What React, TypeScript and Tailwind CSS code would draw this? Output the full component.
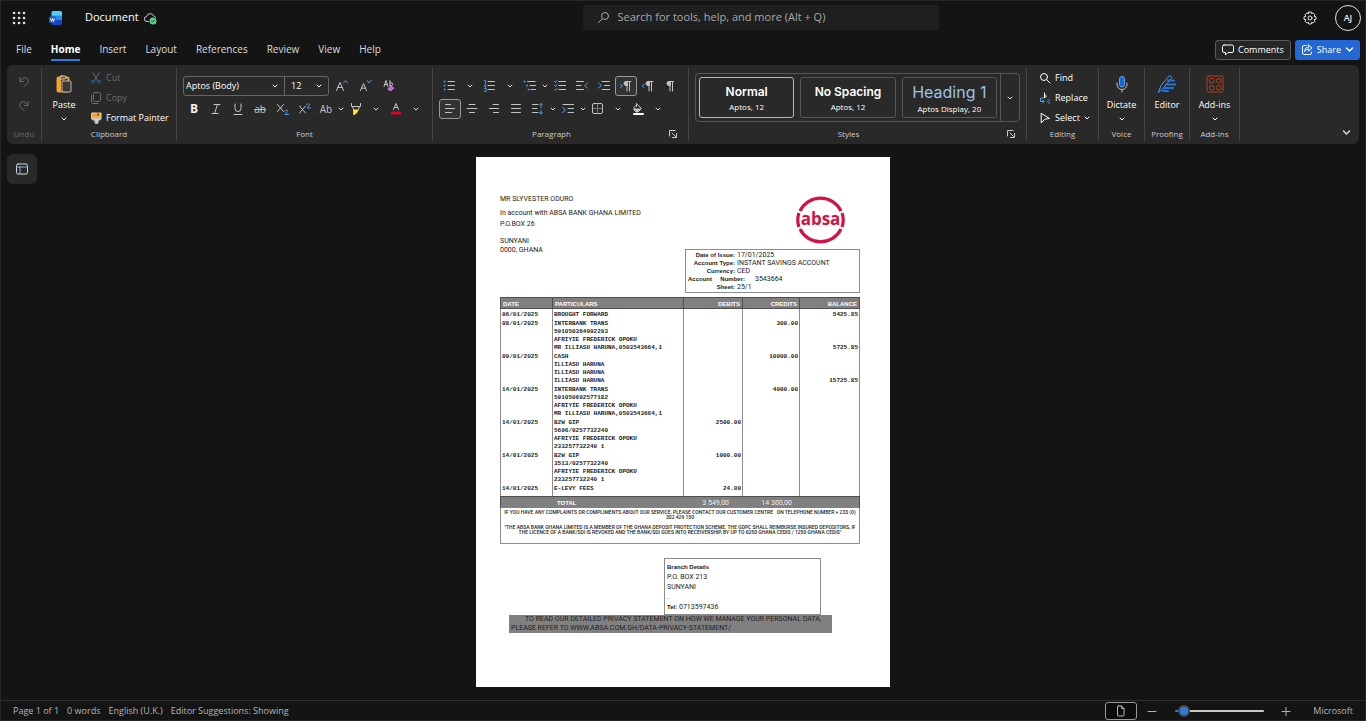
import type { ReactNode } from 'react';

interface Transaction {
    date: string;
    lines: string[];
    debit?: string;
    credit?: string;
    balance?: string;
}

const menuTabs = ['File', 'Home', 'Insert', 'Layout', 'References', 'Review', 'View', 'Help'];

const transactions: Transaction[] = [
    { date: '06/01/2025', lines: ['BROUGHT FORWARD'], balance: '5425.85' },
    {
        date: '08/01/2025',
        lines: ['INTERBANK TRANS', '591050364992293', 'AFRIYIE FREDERICK OPOKU', 'MR ILLIASU HARUNA,0503543664,1'],
        credit: '300.00',
        balance: '5725.85',
    },
    {
        date: '09/01/2025',
        lines: ['CASH', 'ILLIASU HARUNA', 'ILLIASU HARUNA', 'ILLIASU HARUNA'],
        credit: '10000.00',
        balance: '15725.85',
    },
    {
        date: '14/01/2025',
        lines: ['INTERBANK TRANS', '591050692577182', 'AFRIYIE FREDERICK OPOKU', 'MR ILLIASU HARUNA,0503543664,1'],
        credit: '4000.00',
    },
    {
        date: '14/01/2025',
        lines: ['B2W GIP', '5696/0257732240', 'AFRIYIE FREDERICK OPOKU', '233257732240 1'],
        debit: '2500.00',
    },
    {
        date: '14/01/2025',
        lines: ['B2W GIP', '3513/0257732240', 'AFRIYIE FREDERICK OPOKU', '233257732240 1'],
        debit: '1000.00',
    },
    { date: '14/01/2025', lines: ['E-LEVY FEES'], debit: '24.00' },
];

const blue = '#4a9be8';

function Svg({ size = 14, box = 14, children }: { size?: number; box?: number; children: ReactNode }) {
    return (
        <svg
            width={size}
            height={size}
            viewBox={`0 0 ${box} ${box}`}
            fill="none"
            stroke="currentColor"
            strokeLinecap="round"
            strokeLinejoin="round"
            className="shrink-0"
            aria-hidden="true"
        >
            {children}
        </svg>
    );
}

function Chevron({ size = 6 }: { size?: number }) {
    return (
        <Svg size={size} box={6}>
            <path d="M1 2l2 2 2-2" />
        </Svg>
    );
}

const WordLogo = () => (
    <svg width="14" height="16" viewBox="0 0 14 16" aria-hidden="true">
        <path d="M4 1h7.500A1.500 1.500 0 0113 2.500V6H2.500V2.500A1.500 1.500 0 014 1z" fill="#4fd0f5" />
        <path d="M2.500 5.500H13V10H2.500z" fill="#2b8cf0" />
        <path d="M2.500 10H13v3.500a1.500 1.500 0 01-1.500 1.500H4a1.500 1.500 0 01-1.500-1.500z" fill="#1746b8" />
        <rect x="0" y="6.500" width="7" height="6.500" rx="1" fill="#1b57c9" />
        <path d="M1.500 8.300l1 3.200 1-3 1 3 1-3.200" fill="none" stroke="#fff" strokeWidth="0.900" />
    </svg>
);

const CloudSaved = () => (
    <Svg size={14}>
        <path d="M5.500 10.500H4a2.500 2.500 0 01-.3-5A3.600 3.600 0 0110.600 5a2.600 2.600 0 012 1.500" stroke="#c8c8c8" />
        <circle cx="10" cy="10" r="3.500" fill="#5fd08a" stroke="none" />
        <path d="M8.500 10.100l1.100 1.100 2-2.200" stroke="#14532d" />
    </Svg>
);

const Lines = ({ rows, x = 2, end = 12 }: { rows: number[]; x?: number; end?: number }) => (
    <>
        {rows.map((y) => (
            <path key={y} d={`M${x} ${y}.5H${end}`} />
        ))}
    </>
);

const icons = {
    bullets: (
        <Svg>
            <Lines rows={[2, 6, 10]} x={5} end={11.5} />
            <path d="M1.500 2.500h.1M1.500 6.500h.1M1.500 10.500h.1" stroke={blue} strokeWidth="1.800" />
        </Svg>
    ),
    numbers: (
        <Svg>
            <Lines rows={[2, 6, 10]} x={5} end={11.5} />
            <path d="M1.500 1.500h1v3M1.500 6h1.500l-1.500 2h1.500M1.500 9.500h1.500v3H1.500" stroke={blue} />
        </Svg>
    ),
    multilevel: (
        <Svg>
            <path d="M4.500 2.500H12M7 6.500h5.500M8 10.500h4.500" />
            <path d="M1.500 2.500h.1M4 6.500h.1M5.500 10.500h.1" stroke={blue} strokeWidth="1.800" />
        </Svg>
    ),
    checklist: (
        <Svg>
            <Lines rows={[2, 6, 10]} x={6} end={12.5} />
            <path d="M1.500 2.500l1 1 1.500-2M1.500 6.500l1 1 1.500-2M1.500 10.500l1 1 1.500-2" stroke={blue} />
        </Svg>
    ),
    outdent: (
        <Svg>
            <path d="M1.500 2.500H8.500M1.500 6.500H6M1.500 10.500H8.500" />
            <path d="M12.500 4l-3 2.500 3 2.500" stroke={blue} />
        </Svg>
    ),
    indent: (
        <Svg>
            <path d="M5 2.500h7.500M7.500 6.500h5M5 10.500h7.500" />
            <path d="M1.500 4l3 2.500-3 2.500" stroke={blue} />
        </Svg>
    ),
    ltr: (
        <Svg>
            <path d="M8 2.500v9.500M10.500 2.500v9.500M7 2.500h5" />
            <path d="M8 2.500H7a2 2 0 000 4h1z" fill="currentColor" />
            <path d="M1.500 5.500l2 1.500-2 1.500" stroke={blue} />
        </Svg>
    ),
    rtl: (
        <Svg>
            <path d="M8 2.500v9.500M10.500 2.500v9.500M7 2.500h5" />
            <path d="M8 2.500H7a2 2 0 000 4h1z" fill="currentColor" />
            <path d="M3 5.500l-2 1.500 2 1.500" stroke={blue} />
        </Svg>
    ),
    pilcrow: (
        <Svg>
            <path d="M7 2.500v9.500M9.500 2.500v9.500M6 2.500h4.500" />
            <path d="M7 2.500H6a2 2 0 000 4h1z" fill="currentColor" />
        </Svg>
    ),
    left: (
        <Svg>
            <path d="M2.500 2.500h5M2.500 6.500h9M2.500 10.500h6" />
        </Svg>
    ),
    center: (
        <Svg>
            <path d="M4 2.500h6M2 6.500h10M4.500 10.500h5" />
        </Svg>
    ),
    right: (
        <Svg>
            <path d="M6 2.500h5.500M2.500 6.500h9M6.500 10.500h5" />
        </Svg>
    ),
    justify: (
        <Svg>
            <Lines rows={[2, 6, 10]} x={2.5} end={11.5} />
        </Svg>
    ),
    spacing: (
        <Svg>
            <path d="M1.500 2.500H7M1.500 6.500h4.500M1.500 10.500H7" />
            <path d="M10 1.500v4M8.500 3L10 1.500 11.500 3M10 8v4M8.500 10.500L10 12l1.500-1.500" stroke={blue} />
        </Svg>
    ),
    specialIndent: (
        <Svg>
            <path d="M2 2.500h10.500M7 6.500h5.500M7 10.500h5.500" />
            <path d="M1.500 5.500L4.500 8l-3 2.500" stroke={blue} />
        </Svg>
    ),
    borders: (
        <Svg>
            <rect x="1.500" y="1.500" width="10" height="10" rx="1.500" />
            <path d="M6.500 2v9M2 6.500h9" stroke="#777" />
        </Svg>
    ),
    fill: (
        <Svg>
            <path d="M5.500 1.500v3M6.500 2.500l4 4-3.500 3.500H5L3 8V6z" />
            <path d="M3.500 7h6.500l-3 2.500H5z" fill="currentColor" />
            <path d="M3 12h9" strokeWidth="2" stroke="#fff" />
        </Svg>
    ),
    highlight: (
        <Svg>
            <path d="M2.500 1.500v3h9v-3M3.500 4.500l1.500 4h4l1.500-4" />
            <path d="M5 8h4L7.500 11 5 12.500z" fill="#ffee20" stroke="#ffee20" />
        </Svg>
    ),
    fontColor: (
        <Svg>
            <path d="M4.500 7.500L7 1.500l2.500 6M5.500 5.500h3" />
            <path d="M2 9.500h10v3H2z" fill="#e3002b" stroke="none" />
        </Svg>
    ),
    launcher: (
        <Svg size={10} box={10}>
            <path d="M1.500 7V1.500H7M4 4l3.500 3.500M4.500 8.500h4v-4" />
        </Svg>
    ),
    undo: (
        <Svg size={12} box={12}>
            <path d="M2 1.500v4h4M2 5l3-2.500A3.300 3.300 0 019.500 7.300L6 10.500" />
        </Svg>
    ),
    redo: (
        <Svg size={12} box={12}>
            <path d="M10 1.500v4H6M10 5L7 2.500A3.300 3.300 0 002.500 7.300L6 10.500" />
        </Svg>
    ),
    paste: (
        <Svg size={18} box={18}>
            <rect x="2.500" y="2.500" width="11" height="14" rx="1" fill="#2d2d2d" stroke="#f0a030" strokeWidth="2" />
            <path d="M2 3h4v13.500H2z" fill="#f5a02c" stroke="none" />
            <rect x="5" y="1" width="6" height="3" rx="1.300" fill="#555" stroke="#f3d9a8" />
            <rect x="7" y="6" width="9" height="11" rx="1" fill="#383838" stroke="#b8b8b8" />
        </Svg>
    ),
    cut: (
        <Svg size={12} box={12}>
            <path d="M3 1l5 8M9 1L4 9" />
            <g stroke="#2b5f94">
                <circle cx="3" cy="9.800" r="1.500" />
                <circle cx="9" cy="9.800" r="1.500" />
            </g>
        </Svg>
    ),
    copy: (
        <Svg size={12} box={12}>
            <rect x="3.500" y="0.500" width="7" height="9" rx="1.200" />
            <path d="M1.500 3v7a1.500 1.500 0 001.500 1.500h5" />
        </Svg>
    ),
    painter: (
        <Svg size={12} box={12}>
            <path d="M2 1h9v5H2z" fill="#f5a02c" stroke="#f3d9a8" />
            <path d="M2 6h9v1.500L8 8.500v2.500L6.500 12 5 11V8.500L2 7.500z" fill="#d0d0d0" stroke="#bbb" />
            <path d="M8 1v2.500" stroke="#4a3310" />
        </Svg>
    ),
    find: (
        <Svg size={12} box={12}>
            <circle cx="5" cy="5" r="3.500" />
            <path d="M7.700 7.700L11 11" />
        </Svg>
    ),
    replace: (
        <Svg size={12} box={12}>
            <path d="M5.500 1v4.500M5.500 3.500c2-1.500 3 2 0 2" />
            <path d="M4.500 6H1.500v3.500H5M3.700 8L5.200 9.500 3.700 11M10.800 8c-3-.5-3 3.500 0 3" stroke={blue} />
        </Svg>
    ),
    select: (
        <Svg size={12} box={12}>
            <path d="M2.500 1.500l8 5-4.500.7-3.500 3.300z" />
        </Svg>
    ),
    microphone: (
        <Svg size={18} box={18}>
            <path d="M4 8v1.500a5 5 0 0010 0V8M9 14.500V17" stroke="#c4c4c4" />
            <rect x="6.500" y="1.500" width="5" height="10.500" rx="2.500" fill="#1664d0" stroke="#5aa6f0" />
        </Svg>
    ),
    editor: (
        <Svg size={20} box={20}>
            <path d="M1.500 18L4 11.500 12.500 1.500 15 3.500 6.500 14z" stroke="#4a9be8" />
            <path d="M11 6.500h6M9 10.500h9.500M7 14h9M6 17h5" stroke="#2372d8" strokeWidth="2" />
        </Svg>
    ),
    addins: (
        <Svg size={18} box={18}>
            <g stroke="#b5411e">
                <rect x="1" y="1" width="16" height="16" rx="1.500" />
                <rect x="3.500" y="3.500" width="4.500" height="4.500" rx="1" />
                <rect x="10.500" y="3.500" width="4.500" height="4.500" rx="2" />
                <rect x="3.500" y="10.500" width="4.500" height="4.500" rx="2" />
                <rect x="10.500" y="10.500" width="4.500" height="4.500" rx="2" />
            </g>
        </Svg>
    ),
    comment: (
        <Svg size={12} box={12}>
            <path d="M2 1h8a1.500 1.500 0 011.500 1.500v4.500A1.500 1.500 0 0110 8.500H6L3.500 11V8.500H2A1.500 1.500 0 01.500 7V2.500A1.500 1.500 0 012 1z" />
        </Svg>
    ),
    share: (
        <Svg size={12} box={12}>
            <path d="M5 1.500H3A1.500 1.500 0 001.500 3v6A1.500 1.500 0 003 10.500h6A1.500 1.500 0 0010.500 9V8" />
            <path d="M7.500 1l3.500 3-3.500 3V5C5.500 5 4.500 6 3.800 7.500 3.800 5 5 3 7.500 3z" />
        </Svg>
    ),
    gear: (
        <Svg size={14}>
            <circle cx="7" cy="7" r="2" />
            <path d="M5.800 1h2.400l.4 1.700 1.500-.8 1.900 1.900-.9 1.500 1.900.5v2.400l-1.900.5.9 1.500-1.900 1.900-1.500-.8L8.200 13H5.800l-.4-1.700-1.500.8L2 10.200l.9-1.500L1 8.200V5.800l1.900-.5L2 3.800l1.900-1.900 1.500.8z" />
        </Svg>
    ),
    navigation: (
        <Svg size={14}>
            <rect x="1.500" y="2" width="11" height="10" rx="1.500" stroke="#d8d8d8" />
            <path d="M1.500 5h11M5 5v7" stroke="#7db8e8" />
        </Svg>
    ),
    page: (
        <Svg size={12} box={12}>
            <path d="M3.500 1h3l2.500 2.500V10a1 1 0 01-1 1H3.500a1 1 0 01-1-1V2a1 1 0 011-1zM6.500 1v2.500H9" />
        </Svg>
    ),
};

function ToolButton({ label, active = false, children }: { label: string; active?: boolean; children: ReactNode }) {
    return (
        <button
            type="button"
            aria-label={label}
            title={label}
            className={`flex h-5 w-[22px] shrink-0 items-center justify-center rounded-[3px] text-[#c4c4c4] ${
                active ? 'border border-[#9a9a9a] bg-[#333333]' : ''
            }`}
        >
            {children}
        </button>
    );
}

function MenuArrow({ label, wide = false }: { label: string; wide?: boolean }) {
    return (
        <button
            type="button"
            aria-label={label}
            className={`flex h-5 shrink-0 items-center justify-center text-[#d8d8d8] ${wide ? 'w-[18px]' : 'w-2'}`}
        >
            <Chevron />
        </button>
    );
}

function Group({
    name,
    width,
    launcher = false,
    dim = false,
    children,
}: {
    name: string;
    width: string;
    launcher?: boolean;
    dim?: boolean;
    children: ReactNode;
}) {
    return (
        <section aria-label={name} className={`flex shrink-0 flex-col border-r border-[#444444] px-1.5 ${width}`}>
            <div className="h-[60px]">{children}</div>
            <div className={`flex h-3 items-center ${dim ? 'text-[#6b6b6b]' : 'text-[#cccccc]'}`}>
                <span className="flex flex-1 justify-center text-[8px] whitespace-nowrap">{name}</span>
                {launcher && (
                    <button type="button" aria-label={`${name} settings`} className="flex w-[18px] justify-center">
                        {icons.launcher}
                    </button>
                )}
            </div>
        </section>
    );
}

function RowButton({
    icon,
    text,
    disabled = false,
    arrow = false,
}: {
    icon: ReactNode;
    text: string;
    disabled?: boolean;
    arrow?: boolean;
}) {
    return (
        <button
            type="button"
            disabled={disabled}
            className={`flex h-5 items-center gap-1 whitespace-nowrap ${
                disabled ? 'text-[#6b6b6b]' : 'font-medium text-white'
            }`}
        >
            {icon}
            {text}
            {arrow && <Chevron />}
        </button>
    );
}

function BigButton({ icon, text, arrow = false }: { icon: ReactNode; text: string; arrow?: boolean }) {
    return (
        <button type="button" className="flex w-full flex-col items-center pt-1.5 font-medium text-white">
            <span className="flex h-5 items-center">{icon}</span>
            <span className="mt-1 leading-[14px]">{text}</span>
            {arrow && (
                <span className="mt-1">
                    <Chevron />
                </span>
            )}
        </button>
    );
}

function TitleBar() {
    return (
        <header className="grid h-[33px] grid-cols-[15fr_356px_11fr] items-center">
            <div className="flex items-center pl-[11px]">
                <button type="button" aria-label="App launcher" className="text-[#dddddd]">
                    <Svg>
                        {[2, 7, 12].map((y) => (
                            <path key={y} d={`M2 ${y}h.1M7 ${y}h.1M12 ${y}h.1`} strokeWidth="2.6" />
                        ))}
                    </Svg>
                </button>
                <span className="ml-[23px]">
                    <WordLogo />
                </span>
                <h1 className="mr-1 ml-[22px] text-[11px] text-white">Document</h1>
                <CloudSaved />
            </div>
            <label className="flex h-[25px] items-center gap-2 rounded-[3px] bg-[#1f1f1f] px-3.5 text-[#a8a8a8]">
                <Svg size={13} box={13}>
                    <circle cx="8" cy="5" r="3.5" />
                    <path d="M5.300 7.700L1.500 11.500" />
                </Svg>
                <input
                    type="search"
                    aria-label="Search"
                    placeholder="Search for tools, help, and more (Alt + Q)"
                    className="min-w-0 flex-1 bg-transparent text-[11px] outline-none placeholder:text-[#a8a8a8]"
                />
            </label>
            <div className="flex items-center justify-end gap-[18px] pr-1 text-[#e8e8e8]">
                <button type="button" aria-label="Settings">
                    {icons.gear}
                </button>
                <button
                    type="button"
                    aria-label="Account"
                    className="flex size-[26px] items-center justify-center rounded-full border border-[#e0e0e0] text-[9px] font-semibold"
                >
                    AJ
                </button>
            </div>
        </header>
    );
}

function MenuBar() {
    return (
        <div className="flex h-[31px] items-center justify-between pr-[5px] pl-[15px]">
            <nav className="flex gap-[19px] text-[10px] text-[#dddddd]">
                {menuTabs.map((tab) => (
                    <a
                        key={tab}
                        href={`#${tab.toLowerCase()}`}
                        className={`flex h-[22px] items-center border-b-2 pt-0.5 ${
                            tab === 'Home' ? 'border-[#2b7de0] font-bold text-white' : 'border-transparent'
                        }`}
                    >
                        {tab}
                    </a>
                ))}
            </nav>
            <div className="flex gap-1 font-medium">
                <button
                    type="button"
                    className="flex h-5 items-center gap-1 rounded-[3px] border border-[#5c5c5c] bg-[#262626] px-1.5 text-white"
                >
                    {icons.comment}
                    Comments
                </button>
                <button
                    type="button"
                    className="flex h-5 items-center gap-1 rounded-[3px] bg-[#2368d4] px-1.5 text-white"
                >
                    {icons.share}
                    Share
                    <Chevron size={9} />
                </button>
            </div>
        </div>
    );
}

function FontGroup() {
    return (
        <Group name="Font" width="w-64">
            <div className="flex gap-0.5 pt-2">
                <div className="flex h-5 rounded-[3px] border border-[#666666] font-medium text-white">
                    <div className="relative w-[101px] border-r border-[#666666]">
                        <select aria-label="Font" className="h-full w-full appearance-none pl-0.5 outline-none">
                            <option>Aptos (Body)</option>
                        </select>
                        <span className="pointer-events-none absolute inset-y-0 right-1.5 flex items-center">
                            <Chevron />
                        </span>
                    </div>
                    <div className="relative w-[43px]">
                        <select aria-label="Font size" className="h-full w-full appearance-none pl-1.5 outline-none">
                            <option>12</option>
                        </select>
                        <span className="pointer-events-none absolute inset-y-0 right-1.5 flex items-center">
                            <Chevron />
                        </span>
                    </div>
                </div>
                <ToolButton label="Increase font size">
                    <Svg>
                        <path d="M1.500 11.500L5 3.500l3.500 8M2.800 8.500h4.400" />
                        <path d="M8.500 4l2-2.500 2 2.500" stroke={blue} />
                    </Svg>
                </ToolButton>
                <ToolButton label="Decrease font size">
                    <Svg>
                        <path d="M1.500 11.500l3-7 3 7M2.500 9.200h4" />
                        <path d="M8 1.500L10 4l2-2.500" stroke={blue} />
                    </Svg>
                </ToolButton>
                <ToolButton label="Clear formatting">
                    <Svg>
                        <path d="M1 7.500l2-6 2 6M1.800 5.500h2.500M7 1.500v5M7 4a1.600 1.600 0 110 2.500" />
                        <path d="M5 9.500l3-2.500L11 9 8.500 11.500H6.500z" fill="#c26bd6" stroke="#c26bd6" />
                    </Svg>
                </ToolButton>
            </div>
            <div className="mt-[3px] flex">
                <ToolButton label="Bold">
                    <b className="text-xs text-[#f0f0f0]">B</b>
                </ToolButton>
                <ToolButton label="Italic">
                    <Svg>
                        <path d="M5 2.500h6M3 11.500h6M8.500 2.500l-3 9" />
                    </Svg>
                </ToolButton>
                <ToolButton label="Underline">
                    <Svg>
                        <path d="M4 2v4.500a3 3 0 006 0V2M3 12.500h8" />
                    </Svg>
                </ToolButton>
                <ToolButton label="Strikethrough">
                    <s className="text-[10px]">ab</s>
                </ToolButton>
                <ToolButton label="Subscript">
                    <Svg>
                        <path d="M2.500 2.500l6 7M8.500 2.500l-6 7" />
                        <path d="M10 9c1-1.500 3-1 2.500.5L10 12.500h3.500" stroke={blue} />
                    </Svg>
                </ToolButton>
                <ToolButton label="Superscript">
                    <Svg>
                        <path d="M2.500 4l6 7M8.500 4l-6 7" />
                        <path d="M10 2.500c1-1.500 3-1 2.500.5L10 6h3.500" stroke={blue} />
                    </Svg>
                </ToolButton>
                <ToolButton label="Change case">
                    <span className="text-[10px]">Ab</span>
                </ToolButton>
                <MenuArrow label="Change case options" />
                <ToolButton label="Highlight">{icons.highlight}</ToolButton>
                <MenuArrow label="Highlight colours" wide />
                <ToolButton label="Font colour">{icons.fontColor}</ToolButton>
                <MenuArrow label="Font colours" wide />
            </div>
        </Group>
    );
}

function ParagraphGroup() {
    return (
        <Group name="Paragraph" width="w-64" launcher>
            <div className="flex pt-2">
                <ToolButton label="Bullets">{icons.bullets}</ToolButton>
                <MenuArrow label="Bullet options" wide />
                <ToolButton label="Numbering">{icons.numbers}</ToolButton>
                <MenuArrow label="Numbering options" wide />
                <ToolButton label="Multilevel list">{icons.multilevel}</ToolButton>
                <MenuArrow label="Multilevel options" />
                <ToolButton label="Checklist">{icons.checklist}</ToolButton>
                <ToolButton label="Decrease indent">{icons.outdent}</ToolButton>
                <ToolButton label="Increase indent">{icons.indent}</ToolButton>
                <ToolButton label="Left to right" active>
                    {icons.ltr}
                </ToolButton>
                <ToolButton label="Right to left">{icons.rtl}</ToolButton>
                <ToolButton label="Show marks">{icons.pilcrow}</ToolButton>
            </div>
            <div className="mt-[3px] flex">
                <ToolButton label="Align left" active>
                    {icons.left}
                </ToolButton>
                <ToolButton label="Centre">{icons.center}</ToolButton>
                <ToolButton label="Align right">{icons.right}</ToolButton>
                <ToolButton label="Justify">{icons.justify}</ToolButton>
                <ToolButton label="Line spacing">{icons.spacing}</ToolButton>
                <MenuArrow label="Line spacing options" />
                <ToolButton label="Special indent">{icons.specialIndent}</ToolButton>
                <MenuArrow label="Indent options" />
                <ToolButton label="Borders">{icons.borders}</ToolButton>
                <MenuArrow label="Border options" wide />
                <ToolButton label="Shading">{icons.fill}</ToolButton>
                <MenuArrow label="Shading options" wide />
            </div>
        </Group>
    );
}

function StylesGroup() {
    return (
        <Group name="Styles" width="w-[338px]" launcher>
            <div className="flex h-full pt-[5px] pb-1.5">
                <div className="flex flex-1 rounded border border-[#555555]">
                    <div className="grid flex-1 grid-cols-3 gap-1.5 p-[3px] text-white">
                        <button type="button" className="rounded-[3px] border border-[#b8b8b8]">
                            <span className="block font-[Inter] text-xs leading-[18px] font-semibold">Normal</span>
                            <span className="block text-[8px] leading-3 font-medium">Aptos, 12</span>
                        </button>
                        <button type="button" className="rounded-[3px] border border-[#555555]">
                            <span className="block font-[Inter] text-xs leading-[18px] font-semibold whitespace-nowrap">
                                No Spacing
                            </span>
                            <span className="block text-[8px] leading-3 font-medium">Aptos, 12</span>
                        </button>
                        <button type="button" className="rounded-[3px] border border-[#555555]">
                            <span className="block font-[Inter] text-base leading-[22px] font-normal whitespace-nowrap text-[#9cc3e6]">
                                Heading 1
                            </span>
                            <span className="block text-[8px] leading-3 font-medium whitespace-nowrap">
                                Aptos Display, 20
                            </span>
                        </button>
                    </div>
                    <button
                        type="button"
                        aria-label="More styles"
                        className="flex w-[19px] items-center justify-center border-l border-[#555555] text-[#d8d8d8]"
                    >
                        <Chevron />
                    </button>
                </div>
            </div>
        </Group>
    );
}

function Ribbon() {
    return (
        <div className="mx-1.5 flex h-[79px] rounded-md bg-[#292929] py-[3px]">
            <Group name="Undo" width="w-[35px]" dim>
                <div className="flex flex-col items-center gap-3 pt-2 text-[#6b6b6b]">
                    <button type="button" aria-label="Undo" disabled>
                        {icons.undo}
                    </button>
                    <button type="button" aria-label="Redo" disabled>
                        {icons.redo}
                    </button>
                </div>
            </Group>
            <Group name="Clipboard" width="w-[135px]">
                <div className="flex gap-2.5">
                    <div className="w-8">
                        <BigButton icon={icons.paste} text="Paste" arrow />
                    </div>
                    <div>
                        <RowButton icon={icons.cut} text="Cut" disabled />
                        <RowButton icon={icons.copy} text="Copy" disabled />
                        <RowButton icon={icons.painter} text="Format Painter" />
                    </div>
                </div>
            </Group>
            <FontGroup />
            <ParagraphGroup />
            <StylesGroup />
            <Group name="Editing" width="w-[72px]">
                <div className="pl-1.5">
                    <RowButton icon={icons.find} text="Find" />
                    <RowButton icon={icons.replace} text="Replace" />
                    <RowButton icon={icons.select} text="Select" arrow />
                </div>
            </Group>
            <Group name="Voice" width="w-[46px]">
                <BigButton icon={icons.microphone} text="Dictate" arrow />
            </Group>
            <Group name="Proofing" width="w-[45px]">
                <BigButton icon={icons.editor} text="Editor" />
            </Group>
            <Group name="Add-ins" width="w-[50px]">
                <BigButton icon={icons.addins} text="Add-ins" arrow />
            </Group>
            <div className="flex flex-1 items-end justify-end pr-2 pb-1">
                <button type="button" aria-label="Collapse ribbon" className="text-[#d8d8d8]">
                    <Chevron size={9} />
                </button>
            </div>
        </div>
    );
}

const AbsaLogo = () => (
    <svg width="50" height="50" viewBox="0 0 50 50" role="img" aria-label="absa">
        <g fill="none" stroke="#d31245" strokeWidth="3.200">
            <path d="M4 16A22.800 22.800 0 0145 16" />
            <path d="M4 34A22.800 22.800 0 0045 34" />
            <path d="M2.900 18a22.800 22.800 0 000 14" />
            <path d="M46.100 18a22.800 22.800 0 010 14" />
        </g>
        <text x="24.500" y="30" textAnchor="middle" fill="#d31245" className="font-['Open_Sans'] text-[17px] font-bold">
            absa
        </text>
    </svg>
);

const details = [
    ['Date of Issue:', '17/01/2025'],
    ['Account Type:', 'INSTANT SAVINGS ACCOUNT'],
    ['Currency:', 'CED'],
    ['Account Number:', '3543664'],
    ['Sheet:', '25/1'],
];

function DetailsBox() {
    return (
        <dl className="mt-1 border border-[#8c8c8c] py-px leading-[8px] whitespace-nowrap">
            {details.map(([term, value]) => (
                <div key={term} className="flex items-center gap-0.5">
                    {term === 'Account Number:' ? (
                        <>
                            <dt className="flex w-[59px] justify-between pl-0.5 font-['Liberation_Sans'] text-[6px] font-bold">
                                <span>Account</span>
                                <span>Number:</span>
                            </dt>
                            <dd className="pl-2">{value}</dd>
                        </>
                    ) : (
                        <>
                            <dt className="w-[49px] text-right font-['Liberation_Sans'] text-[6px] font-bold">{term}</dt>
                            <dd>{value}</dd>
                        </>
                    )}
                </div>
            ))}
        </dl>
    );
}

function StatementTable() {
    const cell = 'border-r border-[#8c8c8c] px-px pb-px align-top';
    const head = 'h-3 border-y border-r border-[#4f4f4f] px-0.5 pt-[3px]';

    return (
        <table className="mt-1 w-full table-fixed border-separate border-spacing-0">
            <colgroup>
                <col className="w-[53px]" />
                <col className="w-[131px]" />
                <col className="w-[59px]" />
                <col className="w-[57px]" />
                <col />
            </colgroup>
            <thead className="bg-[#808080] font-['Liberation_Sans'] text-[6px] leading-[7px] text-white">
                <tr>
                    <th className={`${head} border-l text-left`}>DATE</th>
                    <th className={`${head} text-left`}>PARTICULARS</th>
                    <th className={`${head} text-right`}>DEBITS</th>
                    <th className={`${head} text-right`}>CREDITS</th>
                    <th className={`${head} text-right`}>BALANCE</th>
                </tr>
            </thead>
            <tbody className="font-['Liberation_Mono'] text-[6px] leading-[8px] font-bold text-[#222222] [&>tr:first-child>td]:pt-0.5 [&>tr:last-child>td]:pb-[3px]">
                {transactions.map((entry, index) => (
                    <tr key={index}>
                        <td className={`${cell} border-l`}>{entry.date}</td>
                        <td className={cell}>
                            {entry.lines.map((line, lineIndex) => (
                                <div key={lineIndex} className="whitespace-nowrap">
                                    {line}
                                </div>
                            ))}
                        </td>
                        <td className={`${cell} text-right`}>{entry.debit}</td>
                        <td className={`${cell} text-right`}>{entry.credit}</td>
                        <td className="border-r border-[#8c8c8c] px-px pb-px text-right align-bottom">{entry.balance}</td>
                    </tr>
                ))}
            </tbody>
            <tfoot className="bg-[#808080] leading-[8px] text-[#f0f0f0]">
                <tr>
                    <td className="h-3 border-t border-l border-[#4f4f4f]" />
                    <td className="border-t border-[#4f4f4f] pl-1 font-['Liberation_Sans'] text-[6px] font-bold text-white">
                        TOTAL
                    </td>
                    <td className="border-t border-[#4f4f4f] pr-3.5 text-right">3 549,00</td>
                    <td className="border-t border-[#4f4f4f] pr-2 text-right">14 300,00</td>
                    <td className="border-t border-r border-[#4f4f4f]" />
                </tr>
            </tfoot>
        </table>
    );
}

function StatementPage() {
    return (
        <article className="min-h-[530px] w-[414px] bg-white pt-[38px] pr-[30px] pb-12 pl-6 font-[Roboto] text-[7px] leading-[9px] text-[#222222]">
            <div className="flex justify-between">
                <div className="whitespace-nowrap">
                    <p>MR SLYVESTER ODURO</p>
                    <p className="mt-[5px]">In account with ABSA BANK GHANA LIMITED</p>
                    <p className="mt-0.5">P.O.BOX 26</p>
                    <p className="mt-2">SUNYANI</p>
                    <p>0000, GHANA</p>
                </div>
                <div className="w-[175px]">
                    <div className="flex justify-end pr-3.5">
                        <AbsaLogo />
                    </div>
                    <DetailsBox />
                </div>
            </div>

            <StatementTable />

            <div className="h-9 border border-t-0 border-[#8c8c8c] pt-0.5 text-center text-[5px] leading-[5px] font-medium whitespace-nowrap">
                <p>
                    IF YOU HAVE ANY COMPLAINTS OR COMPLIMENTS ABOUT OUR SERVICE, PLEASE CONTACT OUR CUSTOMER CENTRE &nbsp; ON
                    TELEPHONE NUMBER + 233 (0)
                    <br />
                    302 429 150
                </p>
                <p className="mt-[5px]">
                    "THE ABSA BANK GHANA LIMITED IS A MEMBER OF THE GHANA DEPOSIT PROTECTION SCHEME. THE GDPC SHALL REIMBURSE
                    INSURED DEPOSITORS, IF
                    <br />
                    THE LICENCE OF A BANK/SDI IS REVOKED AND THE BANK/SDI GOES INTO RECEIVERSHIP, BY UP TO 6250 GHANA CEDIS /
                    1250 GHANA CEDIS"
                </p>
            </div>

            <address className="mt-3.5 mr-[39px] ml-auto h-[57px] w-[157px] border border-[#8c8c8c] pt-[3px] pl-0.5 leading-[10px] not-italic">
                <p className="font-['Liberation_Sans'] text-[6px] font-bold">Branch Details</p>
                <p>P.O. BOX 213</p>
                <p>SUNYANI</p>
                <p>.</p>
                <p>
                    <b className="font-['Liberation_Sans'] text-[6px]">Tel:</b> 0713597436
                </p>
            </address>
            <p className="mr-7 ml-[9px] bg-[#808080] pl-0.5 indent-3.5 whitespace-nowrap">
                TO READ OUR DETAILED PRIVACY STATEMENT ON HOW WE MANAGE YOUR PERSONAL DATA,
                <br />
                PLEASE REFER TO WWW.ABSA.COM.GH/DATA-PRIVACY-STATEMENT/
            </p>
        </article>
    );
}

function StatusBar() {
    return (
        <footer className="flex h-5 items-center justify-between border-t border-[#2e2e2e] pr-3 pl-3 text-[#b4b4b4]">
            <div className="flex gap-2">
                <span>Page 1 of 1</span>
                <span>0 words</span>
                <span>English (U.K.)</span>
                <span>Editor Suggestions: Showing</span>
            </div>
            <div className="flex items-center">
                <button
                    type="button"
                    aria-label="Page view"
                    className="flex h-[18px] w-8 items-center justify-center rounded-[3px] border border-[#9a9a9a] bg-[#0c0c0c]"
                >
                    {icons.page}
                </button>
                <button type="button" aria-label="Zoom out" className="ml-2">
                    <Svg>
                        <path d="M3 7.500h8" />
                    </Svg>
                </button>
                <input
                    type="range"
                    aria-label="Zoom"
                    min={0}
                    max={100}
                    defaultValue={3}
                    className="mr-[15px] ml-4 h-0.5 w-[89px] appearance-none rounded-full bg-linear-to-r from-[#2b7de0] from-5% to-[#c8c8c8] to-5% [&::-webkit-slider-thumb]:size-3 [&::-webkit-slider-thumb]:appearance-none [&::-webkit-slider-thumb]:rounded-full [&::-webkit-slider-thumb]:border-2 [&::-webkit-slider-thumb]:border-[#4a4a4a] [&::-webkit-slider-thumb]:bg-[#2b7de0]"
                />
                <button type="button" aria-label="Zoom in">
                    <Svg>
                        <path d="M3 7.500h8M7 3.500v8" />
                    </Svg>
                </button>
                <span className="ml-5">Microsoft</span>
            </div>
        </footer>
    );
}

export default function App() {
    return (
        <div className="flex min-h-screen flex-col border border-[#262626] bg-[#141414] font-['Open_Sans',sans-serif] text-[9px]">
            <TitleBar />
            <MenuBar />
            <Ribbon />
            <main className="grid flex-1 grid-cols-[1fr_auto_1fr] items-start">
                <button
                    type="button"
                    aria-label="Navigation"
                    className="mt-[10px] ml-1.5 flex size-[30px] items-center justify-center rounded-md bg-[#292929]"
                >
                    {icons.navigation}
                </button>
                <div className="py-[13px]">
                    <StatementPage />
                </div>
            </main>
            <StatusBar />
        </div>
    );
}
